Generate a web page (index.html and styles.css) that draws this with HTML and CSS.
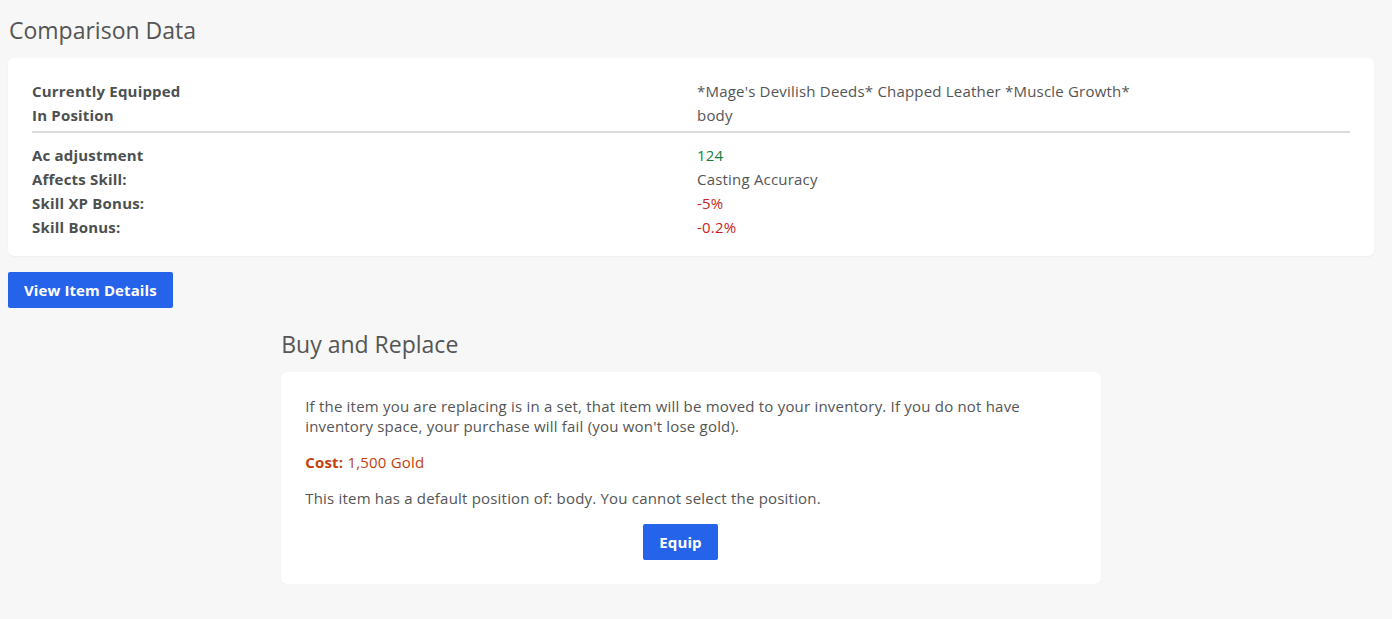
FILE: index.html
```html
<!DOCTYPE html>
<html>
<head>
<meta charset="utf-8">
<link rel="stylesheet" href="styles.css">
</head>
<body>
<div class="page">
  <h2 class="section-title">Comparison Data</h2>
  <div class="card compare-card">
    <dl class="grid">
      <dt>Currently Equipped</dt><dd>*Mage's Devilish Deeds* Chapped Leather *Muscle Growth*</dd>
      <dt>In Position</dt><dd>body</dd>
    </dl>
    <hr class="divider">
    <dl class="grid">
      <dt>Ac adjustment</dt><dd class="good">124</dd>
      <dt>Affects Skill:</dt><dd>Casting Accuracy</dd>
      <dt>Skill XP Bonus:</dt><dd class="bad">-5%</dd>
      <dt>Skill Bonus:</dt><dd class="bad">-0.2%</dd>
    </dl>
  </div>
  <button class="btn">View Item Details</button>

  <div class="buy">
    <h2 class="section-title buy-title">Buy and Replace</h2>
    <div class="card buy-card">
      <p>If the item you are replacing is in a set, that item will be moved to your inventory. If you do not have inventory space, your purchase will fail (you won't lose gold).</p>
      <p class="cost"><strong>Cost:</strong> 1,500 Gold</p>
      <p>This item has a default position of: body. You cannot select the position.</p>
      <div class="actions"><button class="btn">Equip</button></div>
    </div>
  </div>
</div>
</body>
</html>
```

FILE: styles.css
```css
html, body {
  margin: 0;
  padding: 0;
  background: #f7f7f7;
}
body {
  font-family: "Open Sans", "Lato", sans-serif;
  color: #555;
  font-size: 15px;
  letter-spacing: 0.2px;
}
.page {
  width: 1366px;
  padding: 0 0 0 8px;
}
.section-title {
  margin: 0;
  font-size: 23px;
  font-weight: 400;
  color: #555;
  line-height: 32px;
  letter-spacing: 0;
  padding: 14px 0 12px 1px;
}
.card {
  background: #fff;
  border-radius: 6px;
  box-shadow: 0 1px 2px rgba(0,0,0,0.04);
}
.compare-card {
  padding: 21px 24px 17px;
}
.grid {
  display: grid;
  grid-template-columns: 1fr 1fr;
  column-gap: 12px;
  margin: 0;
}
.grid dt {
  font-weight: 700;
  color: #4b5050;
  line-height: 24px;
}
.grid dd {
  margin: 0;
  line-height: 24px;
}
.divider {
  border: 0;
  height: 2px;
  background: #dcdcdc;
  margin: 4px 0 10px;
}
.good { color: #16803c; }
.bad { color: #c81e1e; }
.btn {
  font-family: inherit;
  font-size: 15px;
  font-weight: 700;
  letter-spacing: 0.1px;
  color: #fff;
  background: #2563eb;
  border: 0;
  border-radius: 2px;
  height: 36px;
  padding: 0 16px;
  margin-top: 16px;
}
.buy {
  width: 60%;
  margin: 16px auto 0;
}
.buy-title {
  padding: 4px 0 12px;
}
.buy-card {
  padding: 24px 24px 24px;
}
.buy-card p {
  margin: 0 0 16px;
  line-height: 20px;
}
.cost { color: #c2410c; }
.actions {
  display: flex;
  justify-content: center;
  padding-right: 21px;
}
.actions .btn { margin-top: 0; }
```
